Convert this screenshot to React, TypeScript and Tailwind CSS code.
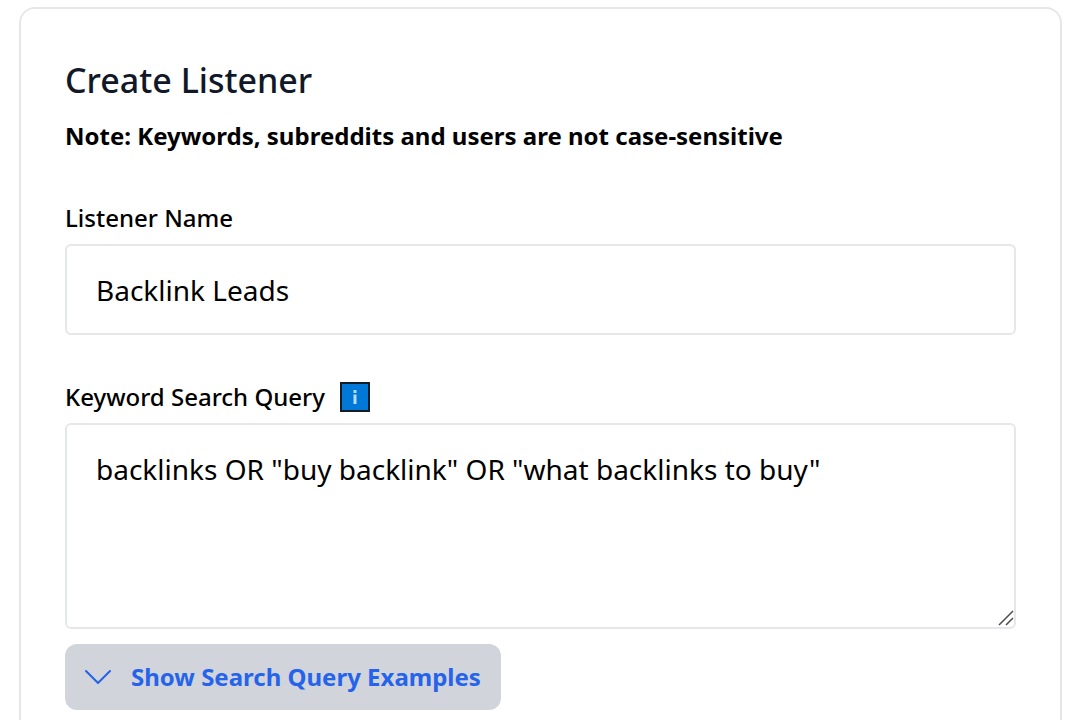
import { useState } from "react";

function InfoIcon() {
  return (
    <svg width="30" height="30" viewBox="0 0 30 30" aria-hidden="true">
      <rect x="1" y="1" width="28" height="28" fill="#0078d7" stroke="#141c26" strokeWidth="2" />
      <path d="M15 8v3M15 12.5v9.5" stroke="#b5dcfa" strokeWidth="3" />
    </svg>
  );
}

function ChevronIcon() {
  return (
    <svg
      width="26"
      height="16"
      viewBox="0 0 26 16"
      fill="none"
      stroke="currentColor"
      strokeWidth="2"
      strokeLinecap="round"
      strokeLinejoin="round"
      aria-hidden="true"
    >
      <path d="M1 2l12 12L25 2" />
    </svg>
  );
}

export default function App() {
  const [name, setName] = useState("Backlink Leads");
  const [query, setQuery] = useState(
    'backlinks OR "buy backlink" OR "what backlinks to buy"'
  );

  return (
    <div className="h-screen overflow-hidden bg-white pt-[7px] pr-[18px] pl-[19px] font-['Noto_Sans','Open_Sans',sans-serif] text-black">
      <form className="h-full rounded-t-2xl border-2 border-b-0 border-[#e5e7eb] px-11 pt-[47px]">
        {/* HEADER */}
        <h1 className="text-[34px] leading-12 font-medium text-[#111827]">
          Create Listener
        </h1>
        <p className="mt-3 text-2xl leading-10 font-bold">
          Note: Keywords, subreddits and users are not case-sensitive
        </p>

        {/* NAME */}
        <label
          htmlFor="name"
          className="mt-[42px] block text-2xl leading-10 font-medium"
        >
          Listener Name
        </label>
        <input
          id="name"
          type="text"
          value={name}
          onChange={(e) => setName(e.target.value)}
          className="mt-1.5 block h-[91px] w-full rounded-md border-2 border-[#e5e7eb] px-[29px] text-[28px] outline-none"
        />

        {/* QUERY */}
        <div className="mt-[42px] flex items-center gap-[15px]">
          <label htmlFor="query" className="text-2xl leading-10 font-medium">
            Keyword Search Query
          </label>
          <InfoIcon />
        </div>
        <div className="relative mt-1.5">
          <textarea
            id="query"
            value={query}
            onChange={(e) => setQuery(e.target.value)}
            className="block h-[206px] w-full resize-y rounded-md border-2 border-[#e5e7eb] px-[29px] py-6 text-[28px] leading-10 outline-none [&::-webkit-resizer]:hidden"
          />
          {/* resize grip */}
          <svg
            width="16"
            height="16"
            viewBox="0 0 16 16"
            className="pointer-events-none absolute right-[2px] bottom-[3px]"
            stroke="#4b4b4b"
            strokeWidth="1.5"
            aria-hidden="true"
          >
            <path d="M1 15L15 1M8 15l7-7" />
          </svg>
        </div>

        <button
          type="button"
          className="mt-[15px] flex h-[66px] items-center gap-5 rounded-xl bg-[#d1d5db] px-5 text-2xl font-bold text-[#2563eb]"
        >
          <ChevronIcon />
          Show Search Query Examples
        </button>
      </form>
    </div>
  );
}
